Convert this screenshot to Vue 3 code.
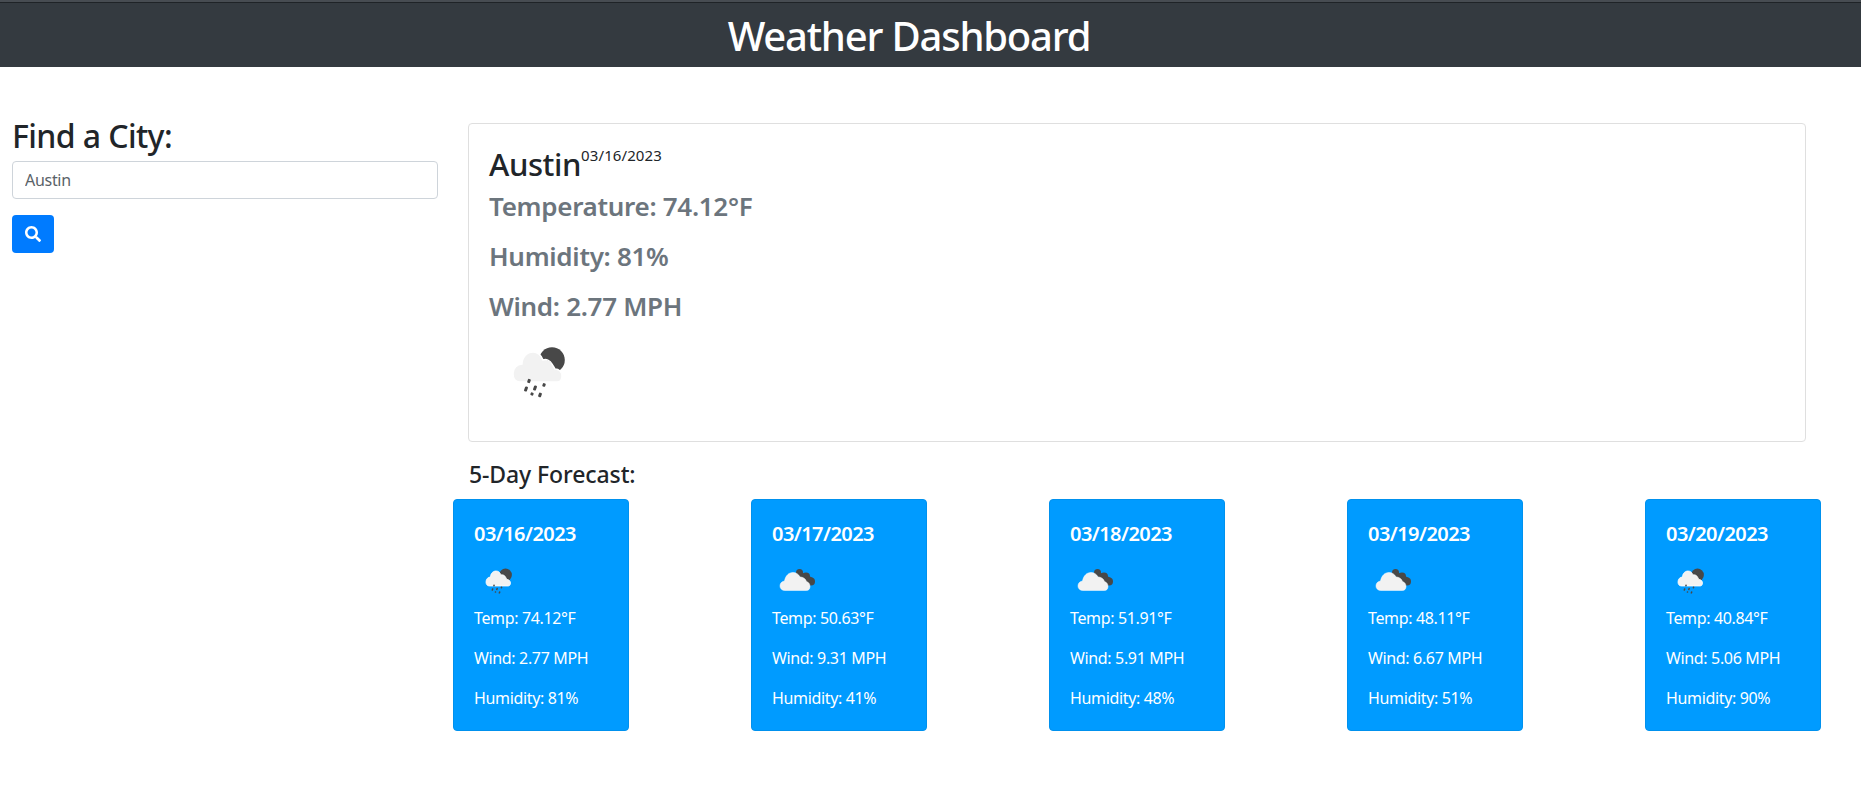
<template>
  <div class="page">
    <header class="topbar">
      <h1>Weather Dashboard</h1>
    </header>

    <div class="content">
      <aside class="search">
        <h3>Find a City:</h3>
        <input class="city-input" type="text" value="Austin">
        <button class="search-btn" aria-label="Search">
          <svg viewBox="0 0 512 512" width="16" height="16">
            <path fill="#fff" d="M505 442.7L405.3 343c-4.5-4.5-10.6-7-17-7H372c27.6-35.3 44-79.7 44-128C416 93.1 322.9 0 208 0S0 93.1 0 208s93.1 208 208 208c48.3 0 92.7-16.4 128-44v16.3c0 6.4 2.5 12.5 7 17l99.7 99.7c9.4 9.4 24.6 9.4 33.9 0l28.3-28.3c9.4-9.4 9.4-24.6.1-34zM208 336c-70.7 0-128-57.2-128-128 0-70.7 57.2-128 128-128 70.7 0 128 57.2 128 128 0 70.7-57.2 128-128 128z"/>
          </svg>
        </button>
      </aside>

      <main class="results">
        <section class="today">
          <h3>Austin<sup>03/16/2023</sup></h3>
          <h4>Temperature: 74.12°F</h4>
          <h4>Humidity: 81%</h4>
          <h4>Wind: 2.77 MPH</h4>
          <svg class="today-icon" viewBox="0 0 100 100" width="100" height="100">
            <use href="#rain-icon" />
          </svg>
        </section>

        <h5 class="forecast-title">5-Day Forecast:</h5>
        <div class="forecast">
          <div v-for="day in days" :key="day.date" class="day-card">
            <div class="day-date">{{ day.date }}</div>
            <svg class="day-icon" viewBox="0 0 100 100" width="50" height="50">
              <use :href="day.rain ? '#rain-icon' : '#cloud-icon'" />
            </svg>
            <p>Temp: {{ day.temp }}°F</p>
            <p>Wind: {{ day.wind }} MPH</p>
            <p>Humidity: {{ day.humidity }}%</p>
          </div>
        </div>
      </main>
    </div>

    <svg class="defs" width="0" height="0">
      <defs>
        <g id="rain-icon">
          <circle cx="63" cy="38" r="12.8" fill="#484848" />
          <path fill="#f2f2f2" stroke="#fff" stroke-width="1.5" d="M31 60C26 60 24 56 24 52C24 46 28 42 33 42C33 35 38 30 44 30C49 30 52 33 54 38C57 37 61 38 63 42C64 44 65 45 66 47C70 47 73 50 73 54C73 58 71 60 68 60Z" />
          <g fill="#484848">
            <rect x="38.5" y="57" width="3" height="4" rx="1" transform="rotate(20 40 59)" />
            <rect x="35.5" y="64.5" width="3" height="5" rx="1" transform="rotate(20 37 67)" />
            <rect x="44.5" y="63.5" width="3" height="5" rx="1" transform="rotate(20 46 66)" />
            <rect x="53.5" y="61.2" width="3" height="3.5" rx="1" transform="rotate(20 55 63)" />
            <rect x="41.5" y="70.5" width="3" height="3" rx="1" transform="rotate(20 43 72)" />
            <rect x="49.5" y="70.7" width="3" height="4.5" rx="1" transform="rotate(20 51 73)" />
          </g>
        </g>
        <g id="cloud-icon">
          <g fill="#484848">
            <circle cx="55" cy="33" r="7" />
            <circle cx="68" cy="41" r="8" />
            <circle cx="78" cy="51" r="8" />
            <path d="M50 28L82 44L76 59L60 50Z" />
          </g>
          <path fill="#f2f2f2" stroke="#fff" stroke-width="1" d="M26 69C20 69 16 65 16 60C16 54 20 51 25 50C27 40 33 33 42 33C48 33 53 36 56 42C62 42 67 45 69 51C73 52 76 56 76 61C76 66 73 69 69 69Z" />
        </g>
      </defs>
    </svg>
  </div>
</template>

<script setup>
const days = [
  { date: '03/16/2023', temp: '74.12', wind: '2.77', humidity: 81, rain: true },
  { date: '03/17/2023', temp: '50.63', wind: '9.31', humidity: 41, rain: false },
  { date: '03/18/2023', temp: '51.91', wind: '5.91', humidity: 48, rain: false },
  { date: '03/19/2023', temp: '48.11', wind: '6.67', humidity: 51, rain: false },
  { date: '03/20/2023', temp: '40.84', wind: '5.06', humidity: 90, rain: true }
]
</script>

<style>
body {
  margin: 0;
  background: #fff;
}
</style>

<style scoped>
.page {
  font-family: "Noto Sans", "Open Sans", sans-serif;
  color: #212529;
  font-size: 16px;
  line-height: 1.5;
}

.topbar {
  height: 67px;
  box-sizing: border-box;
  background: #343a40;
  box-shadow: inset 0 2px #474c52, inset 0 3px #1f2327;
  text-align: center;
  padding-top: 6px;
  padding-right: 43px;
}

.topbar h1 {
  margin: 0;
  font-size: 40px;
  font-weight: 500;
  line-height: 60px;
  color: #fff;
  letter-spacing: -1.2px;
}

.content {
  display: flex;
  align-items: flex-start;
  padding: 0 55px 0 12px;
}

.search {
  width: 426px;
  flex: none;
  padding-top: 50px;
}

.search h3 {
  margin: 0 0 7px;
  font-size: 32px;
  font-weight: 500;
  line-height: 37px;
  letter-spacing: -0.6px;
}

.city-input {
  display: block;
  width: 100%;
  height: 38px;
  box-sizing: border-box;
  padding: 6px 12px;
  border: 1px solid #ced4da;
  border-radius: 4px;
  font: inherit;
  color: #5a6268;
  letter-spacing: -0.3px;
}

.search-btn {
  display: flex;
  align-items: center;
  justify-content: center;
  width: 42px;
  height: 38px;
  margin-top: 16px;
  padding: 0;
  border: 0;
  border-radius: 4px;
  background: #007bff;
}

.results {
  flex: 1;
  min-width: 0;
  margin-left: 30px;
  padding-top: 56px;
}

.today {
  height: 319px;
  box-sizing: border-box;
  padding: 19px 20px 20px;
  border: 1px solid #dfdfdf;
  border-radius: 4px;
}

.today h3 {
  margin: 0;
  font-size: 31px;
  font-weight: 500;
  line-height: 42px;
  letter-spacing: -0.4px;
}

.today sup {
  font-size: 15px;
  font-weight: 400;
  letter-spacing: 0.1px;
  line-height: 0;
  position: relative;
  top: -4px;
  vertical-align: super;
}

.today h4 {
  margin: 0 0 8px;
  font-size: 26px;
  font-weight: 600;
  line-height: 42px;
  color: #6c757d;
  letter-spacing: -0.3px;
}

.today-icon {
  display: block;
  margin-top: -13px;
}

.forecast-title {
  margin: 18px 0 11px 1px;
  font-size: 23px;
  font-weight: 500;
  line-height: 28px;
  letter-spacing: -0.1px;
}

.forecast {
  display: flex;
  justify-content: space-between;
  margin: 0 -15px;
}

.day-card {
  width: 176px;
  height: 232px;
  box-sizing: border-box;
  padding: 19px 20px;
  background: #009bff;
  border: 1px solid #0091ee;
  border-radius: 4px;
  color: #fff;
}

.day-date {
  font-size: 20px;
  font-weight: 600;
  line-height: 30px;
  letter-spacing: -0.55px;
}

.day-icon {
  display: block;
  margin-top: 7px;
}

.day-card p {
  margin: 0 0 16px;
  font-size: 16px;
  line-height: 24px;
  letter-spacing: -0.35px;
}

.defs {
  position: absolute;
}
</style>
